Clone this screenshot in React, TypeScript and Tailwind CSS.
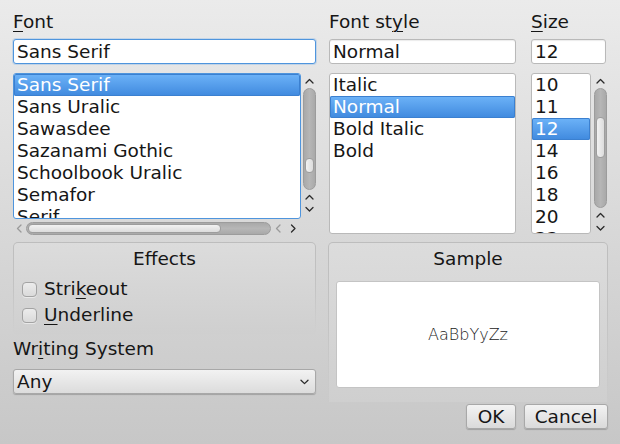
import React from "react";

const FONTS = ["Sans Serif", "Sans Uralic", "Sawasdee", "Sazanami Gothic", "Schoolbook Uralic", "Semafor", "Serif"];
const STYLES = ["Italic", "Normal", "Bold Italic", "Bold"];
const SIZES = ["10", "11", "12", "14", "16", "18", "20", "22"];

type Dir = "up" | "down" | "left" | "right";

const ARROW: Record<Dir, string> = {
  up: "M1 5 L4.5 1.5 L8 5",
  down: "M1 1.5 L4.5 5 L8 1.5",
  left: "M5 1 L1.5 4.5 L5 8",
  right: "M1.5 1 L5 4.5 L1.5 8",
};

function Arrow({ dir, dim }: { dir: Dir; dim?: boolean }) {
  const vert = dir === "up" || dir === "down";
  return (
    <svg width={vert ? 9 : 7} height={vert ? 7 : 9} viewBox={vert ? "0 0 9 7" : "0 0 7 9"} fill="none">
      <path d={ARROW[dir]} stroke={dim ? "#9a9a9a" : "#2a2a2a"} strokeWidth="1.3" strokeLinecap="round" strokeLinejoin="round" />
    </svg>
  );
}

const Mn = ({ children }: { children: React.ReactNode }) => (
  <span className="underline decoration-1 underline-offset-[3px]">{children}</span>
);

// ─── Scrollbars ──────────────────────────────────────────────────────────────

function VScroll({ trough, handleTop, handleH, tail }: { trough: number; handleTop: number; handleH: number; tail: number }) {
  return (
    <div className="flex flex-col items-center w-[13px]">
      <div className="h-[15px] flex items-center justify-center pt-px">
        <Arrow dir="up" />
      </div>
      <div
        className="w-[13px] rounded-full bg-gradient-to-r from-[#a9a9a9] via-[#b6b6b6] to-[#a9a9a9] border border-[#9c9c9c] flex flex-col items-center"
        style={{ height: trough }}
      >
        <div
          className="w-[9px] rounded-[4px] bg-gradient-to-r from-[#f2f2f2] to-[#dcdcdc] border border-[#9d9d9d]"
          style={{ marginTop: handleTop, height: handleH }}
        />
      </div>
      <div className="flex flex-col items-center" style={{ gap: tail }}>
        <div className="pt-[4px]"><Arrow dir="up" /></div>
        <Arrow dir="down" />
      </div>
    </div>
  );
}

function HScroll() {
  return (
    <div className="flex items-center h-[14px] w-[288px] mt-[2px]">
      <div className="w-[13px] flex justify-center"><Arrow dir="left" dim /></div>
      <div className="w-[245px] h-[13px] rounded-full bg-gradient-to-b from-[#a9a9a9] via-[#b6b6b6] to-[#a9a9a9] border border-[#9c9c9c] flex items-center">
        <div className="w-[193px] h-[9px] ml-px rounded-[4px] bg-gradient-to-b from-[#f2f2f2] to-[#dcdcdc] border border-[#9d9d9d]" />
      </div>
      <div className="flex items-center gap-[8px] ml-[4px]">
        <Arrow dir="left" dim />
        <Arrow dir="right" />
      </div>
    </div>
  );
}

// ─── Inputs & lists ──────────────────────────────────────────────────────────

function Field({ value, focused, w }: { value: string; focused?: boolean; w: number }) {
  return (
    <div
      className={
        "h-[25px] mt-[6px] rounded-[3px] bg-white pl-[3px] leading-[23px] border " +
        (focused ? "border-[#4f95dd] shadow-[0_0_0_1px_rgba(90,160,230,0.25)]" : "border-[#b9b9b9] shadow-[inset_0_1px_1px_rgba(0,0,0,0.08)]")
      }
      style={{ width: w }}
    >
      {value}
    </div>
  );
}

function ListBox({ items, selected, w, h, focused }: { items: string[]; selected: number; w: number; h: number; focused?: boolean }) {
  return (
    <div
      className={
        "bg-white rounded-[3px] border overflow-hidden " +
        (focused ? "border-[#4f95dd]" : "border-[#b9b9b9]")
      }
      style={{ width: w, height: h }}
    >
      {items.map((t, i) => (
        <div
          key={t}
          className={
            "h-[22px] pl-[3px] whitespace-nowrap " +
            (i === selected
              ? "bg-gradient-to-b from-[#6db3f8] to-[#3f89de] text-white rounded-[2px] shadow-[inset_0_0_0_1px_#3b80d0]"
              : "")
          }
        >
          {t}
        </div>
      ))}
    </div>
  );
}

function Checkbox({ children }: { children: React.ReactNode }) {
  return (
    <div className="flex items-center h-[22px]">
      <div className="w-[15px] h-[15px] ml-[8px] mr-[7px] rounded-[4px] border border-[#a3a3a3] bg-gradient-to-b from-[#ececec] to-[#dadada] shadow-[0_1px_0_rgba(255,255,255,0.5)]" />
      <span>{children}</span>
    </div>
  );
}

function GroupBox({ title, h, children }: { title: string; h: number; children: React.ReactNode }) {
  return (
    <div className="rounded-t-[5px] p-px pb-0 bg-gradient-to-b from-[#bdbdbd] via-[#c3c3c3] to-[rgba(200,200,200,0)]" style={{ height: h }}>
      <div className="h-full rounded-t-[4px] bg-gradient-to-b from-[#dcdcdc] to-[#cfcfcf] pt-[5px]">
        <div className="text-center">{title}</div>
        {children}
      </div>
    </div>
  );
}

function Button({ label, w }: { label: string; w: number }) {
  return (
    <div
      className="h-[25px] rounded-[3px] border border-[#a8a8a8] bg-gradient-to-b from-[#f3f3f3] to-[#dadada] shadow-[0_1px_1px_rgba(0,0,0,0.2)] text-center leading-[23px]"
      style={{ width: w }}
    >
      {label}
    </div>
  );
}

// ─── Dialog ──────────────────────────────────────────────────────────────────

export default function App() {
  return (
    <div className="w-[620px] h-[444px] overflow-hidden bg-gradient-to-b from-[#ebebeb] to-[#c7c7c7] pl-[13px] pt-[11px] font-['DejaVu_Sans',sans-serif] text-[18.5px] leading-[22px] text-[#161616]">
      <div className="flex">
        {/* Font */}
        <div className="flex flex-col w-[303px]">
          <div><Mn>F</Mn>ont</div>
          <Field value="Sans Serif" focused w={303} />
          <div className="flex mt-[9px]">
            <ListBox items={FONTS} selected={0} w={288} h={146} focused />
            <div className="ml-[2px]">
              <VScroll trough={102} handleTop={69} handleH={15} tail={5} />
            </div>
          </div>
          <HScroll />
        </div>

        {/* Font style */}
        <div className="flex flex-col w-[187px] ml-[13px]">
          <div>Font st<Mn>y</Mn>le</div>
          <Field value="Normal" w={187} />
          <div className="mt-[9px]">
            <ListBox items={STYLES} selected={1} w={187} h={161} />
          </div>
        </div>

        {/* Size */}
        <div className="flex flex-col w-[76px] ml-[15px]">
          <div><Mn>S</Mn>ize</div>
          <Field value="12" w={75} />
          <div className="flex mt-[9px]">
            <ListBox items={SIZES} selected={2} w={60} h={161} />
            <div className="ml-[3px]">
              <VScroll trough={120} handleTop={28} handleH={41} tail={6} />
            </div>
          </div>
        </div>
      </div>

      <div className="flex mt-[7px]">
        <div className="flex flex-col w-[303px]">
          <GroupBox title="Effects" h={92}>
            <div className="mt-[8px] flex flex-col gap-[4px]">
              <Checkbox>Stri<Mn>k</Mn>eout</Checkbox>
              <Checkbox><Mn>U</Mn>nderline</Checkbox>
            </div>
          </GroupBox>
          <div className="mt-[4px]">Wr<Mn>i</Mn>ting System</div>
          <div className="mt-[9px] h-[25px] rounded-[3px] border border-[#a8a8a8] bg-gradient-to-b from-[#f2f2f2] to-[#dcdcdc] shadow-[0_1px_1px_rgba(0,0,0,0.2)] flex items-center justify-between pl-[3px] pr-[6px]">
            <span>Any</span>
            <svg width="9" height="6" viewBox="0 0 9 6" fill="none">
              <path d="M1 1.2 L4.5 4.6 L8 1.2" stroke="#2a2a2a" strokeWidth="1.3" strokeLinecap="round" strokeLinejoin="round" />
            </svg>
          </div>
        </div>

        <div className="flex flex-col w-[280px] ml-[12px]">
          <GroupBox title="Sample" h={160}>
            <div className="mt-[11px] mx-[7px] h-[107px] rounded-[3px] bg-white border border-[#c4c4c4] flex items-center justify-center text-[16px] font-extralight text-[#1a1a1a]">
              AaBbYyZz
            </div>
          </GroupBox>
          <div className="flex justify-end gap-[8px] mt-[2px]">
            <Button label="OK" w={50} />
            <Button label="Cancel" w={84} />
          </div>
        </div>
      </div>
    </div>
  );
}
